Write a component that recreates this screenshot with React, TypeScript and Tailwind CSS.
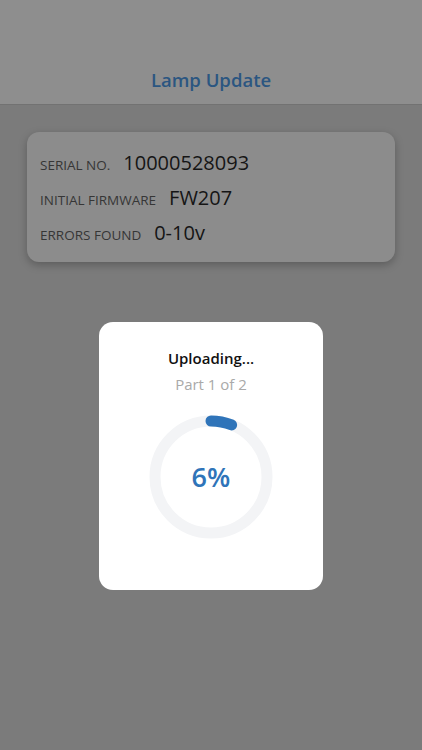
import React from "react";

const FONT = { fontFamily: '"Open Sans", "Noto Sans", sans-serif' };

function InfoRow({ label, value }: { label: string; value: string }) {
  return (
    <div className="flex items-baseline gap-[13px] leading-[27px]">
      <span className="text-[13.5px] font-medium uppercase text-[#363636]">{label}</span>
      <span className="text-[20px] text-[#151515]">{value}</span>
    </div>
  );
}

function ProgressRing({ percent }: { percent: number }) {
  const r = 56;
  const c = 2 * Math.PI * r;
  return (
    <div className="relative h-[124px] w-[124px]">
      <svg width="124" height="124" viewBox="0 0 124 124">
        <circle cx="62" cy="62" r={r} fill="none" stroke="#f3f4f6" strokeWidth="11" />
        <circle
          cx="62"
          cy="62"
          r={r}
          fill="none"
          stroke="#2f74b9"
          strokeWidth="11"
          strokeLinecap="round"
          strokeDasharray={`${(c * percent) / 100} ${c}`}
          transform="rotate(-90 62 62)"
        />
      </svg>
      <div className="absolute inset-0 flex items-center justify-center text-[27px] font-semibold text-[#2f74b9]">
        {percent}%
      </div>
    </div>
  );
}

export default function App() {
  return (
    <div className="flex h-[750px] w-[422px] flex-col bg-[#7b7b7b]" style={FONT}>
      <header className="flex h-[105px] items-end justify-center border-b border-[#727272] bg-[#8e8e8e] pb-[10px]">
        <h1 className="text-[18.5px] font-semibold text-[#2b5681]">Lamp Update</h1>
      </header>

      <div className="px-[27px] pt-[27px]">
        <div className="flex h-[130px] flex-col justify-center gap-[5px] rounded-[12px] bg-[#8c8c8c] px-[13px] pt-[4px] shadow-[0_3px_8px_rgba(0,0,0,0.25)]">
          <InfoRow label="Serial No." value="10000528093" />
          <InfoRow label="Initial Firmware" value="FW207" />
          <InfoRow label="Errors Found" value="0-10v" />
        </div>
      </div>

      <div className="flex justify-center pt-[60px]">
        <div className="flex h-[268px] w-[224px] flex-col items-center rounded-[14px] bg-white pt-[25px]">
          <div className="text-[15px] font-semibold text-[#111]">Uploading...</div>
          <div className="mt-[3px] text-[15px] text-[#a9a9a9]">Part 1 of 2</div>
          <div className="mt-[20px]">
            <ProgressRing percent={6} />
          </div>
        </div>
      </div>
    </div>
  );
}
